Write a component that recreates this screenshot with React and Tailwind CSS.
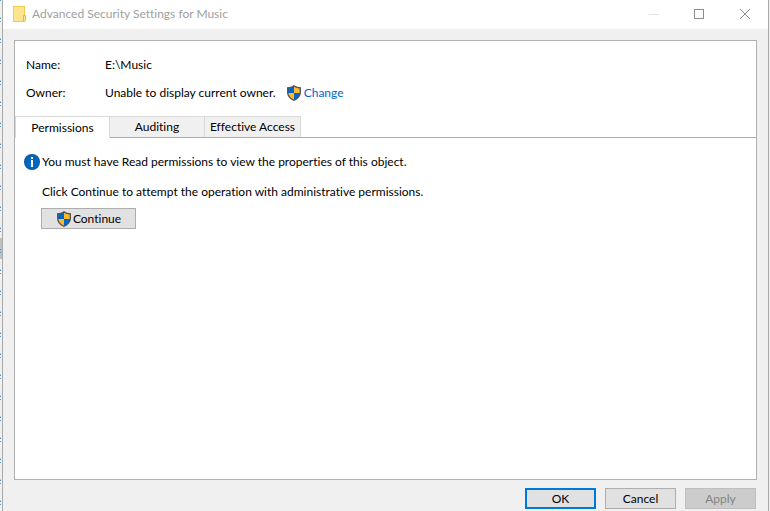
import React from "react";

function Shield() {
  return (
    <svg width="16" height="16" viewBox="0 0 16 16" className="shrink-0" aria-hidden="true">
      <path d="M8 0C6.200 1.500 3.600 2.200 1 2.200V7c0 4.200 2.900 7.300 7 9 4.100-1.700 7-4.800 7-9V2.200C12.400 2.200 9.800 1.500 8 0z" fill="#51555c" />
      <path d="M8 1.700C6.400 2.700 4.500 3.300 2.400 3.500V8H8z" fill="#0067c8" />
      <path d="M8 1.700c1.600 1 3.500 1.600 5.600 1.800V8H8z" fill="#ffb92e" />
      <path d="M2.400 8c.4 3 2.600 5.200 5.600 6.600V8z" fill="#ffb92e" />
      <path d="M13.600 8c-.4 3-2.600 5.200-5.600 6.600V8z" fill="#0067c8" />
    </svg>
  );
}

function InfoIcon() {
  return (
    <svg width="16" height="16" viewBox="0 0 16 16" className="shrink-0" aria-hidden="true">
      <circle cx="8" cy="8" r="8" fill="#0a559f" />
      <circle cx="8" cy="8" r="7" fill="#0067c0" />
      <rect x="7" y="3" width="2" height="2" fill="#fff" />
      <rect x="7" y="6" width="2" height="7" fill="#fff" />
    </svg>
  );
}

function FolderIcon() {
  return (
    <svg width="13" height="16" viewBox="0 0 13 16" className="shrink-0" aria-hidden="true">
      <rect x=".5" y=".5" width="11" height="15" fill="#ffe48f" stroke="#efcb56" />
      <path d="M10.500 15.500v-6h2v5l-1 1z" fill="#ffe48f" stroke="#e6b93c" />
    </svg>
  );
}

const rows = Array.from({ length: 25 }, (_, i) => i);

function BackgroundList() {
  return (
    <div className="w-[2px] shrink-0 overflow-hidden bg-[#f0f0f0]" aria-hidden="true">
      <div className="-mt-[14px]">
        {rows.map((i) => (
          <div key={i} className={i === 12 ? "h-[21px] bg-[#c0c0c0] pt-[10px]" : "h-[21px] pt-[10px]"}>
            <div className="h-px w-px bg-[#a5d3ee]" />
            <div className="h-px w-px bg-[#4a8fc8]" />
            <div className="mt-[2px] h-px w-px bg-[#5b9bd0]" />
          </div>
        ))}
      </div>
    </div>
  );
}

function TitleBar() {
  return (
    <header className="flex h-[29px] shrink-0 items-start bg-white">
      <div className="flex h-[27px] flex-1 items-center gap-[6px] pl-[10px]">
        <FolderIcon />
        <h1 className="text-[#a0a0a0]">Advanced Security Settings for Music</h1>
      </div>
      <button type="button" aria-label="Minimize" disabled className="flex h-[27px] w-[45px] items-center justify-center">
        <svg width="10" height="10" viewBox="0 0 10 10"><path d="M0 5.500h10" stroke="#e3e3e3" /></svg>
      </button>
      <button type="button" aria-label="Maximize" className="flex h-[27px] w-[46px] items-center justify-center">
        <svg width="10" height="10" viewBox="0 0 10 10"><rect x=".5" y=".5" width="9" height="9" fill="none" stroke="#8c8c8c" /></svg>
      </button>
      <button type="button" aria-label="Close" className="flex h-[27px] w-[46px] items-center justify-center">
        <svg width="10" height="10" viewBox="0 0 10 10"><path d="M0 0l10 10M10 0L0 10" stroke="#8c8c8c" /></svg>
      </button>
    </header>
  );
}

export default function App() {
  return (
    <div className="flex h-screen overflow-hidden bg-[#f0f0f0] pr-px font-['Lato','Open_Sans',sans-serif] text-[12px] leading-[16px] text-black [font-variant-ligatures:none]">
      <BackgroundList />
      <div className="flex min-w-0 flex-1 flex-col border-x border-[#a9a9a9] bg-[#f0f0f0]">
        <TitleBar />
        <main className="mx-[11px] mt-[11px] flex min-h-0 flex-1 flex-col border border-[#b0b0b0] bg-white">
          <dl className="grid grid-cols-[79px_1fr] gap-y-3 pt-4 pl-[11px]">
            <dt>Name:</dt>
            <dd>E:\Music</dd>
            <dt>Owner:</dt>
            <dd className="flex items-center">
              <span>Unable to display current owner.</span>
              <a href="#change" className="ml-[10px] flex items-center gap-[2px] text-[#0066cc]">
                <Shield />
                Change
              </a>
            </dd>
          </dl>
          <div role="tablist" className="mt-[15px] flex h-[22px] shrink-0">
            <button type="button" role="tab" aria-selected="true" className="w-[95px] border-x border-t border-[#d9d9d9] bg-white">Permissions</button>
            <div className="flex flex-1 border-b border-[#acacac]">
              <button type="button" role="tab" aria-selected="false" className="w-[95px] border-t border-r border-[#d9d9d9] bg-[#f0f0f0]">Auditing</button>
              <button type="button" role="tab" aria-selected="false" className="w-[96px] border-t border-r border-[#d9d9d9] bg-[#f0f0f0]">Effective Access</button>
            </div>
          </div>
          <section className="pt-4 pl-[9px]">
            <p className="flex items-center gap-[2px]">
              <InfoIcon />
              You must have Read permissions to view the properties of this object.
            </p>
            <p className="mt-[14px] pl-[18px]">Click Continue to attempt the operation with administrative permissions.</p>
            <button type="button" className="mt-2 ml-[17px] flex h-[21px] w-[95px] items-center justify-center gap-px border border-[#adadad] bg-[#e1e1e1]">
              <Shield />
              Continue
            </button>
          </section>
        </main>
        <footer className="flex shrink-0 justify-end gap-[9px] px-3 pt-2 pb-[2px]">
          <button type="button" className="h-[21px] w-[71px] border-2 border-[#0078d7] bg-[#e1e1e1]">OK</button>
          <button type="button" className="h-[21px] w-[71px] border border-[#adadad] bg-[#e1e1e1]">Cancel</button>
          <button type="button" disabled className="h-[21px] w-[71px] border border-[#bfbfbf] bg-[#cccccc] text-[#838383]">Apply</button>
        </footer>
      </div>
    </div>
  );
}
